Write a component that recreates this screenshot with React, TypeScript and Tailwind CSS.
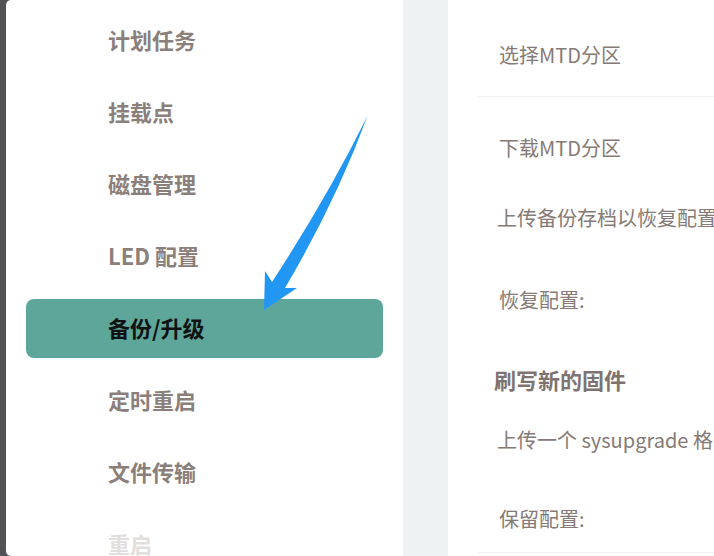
import React from "react";

const menu = [
  { label: "计划任务" },
  { label: "挂载点" },
  { label: "磁盘管理" },
  { label: "LED 配置" },
  { label: "备份/升级", active: true },
  { label: "定时重启" },
  { label: "文件传输" },
  { label: "重启", faded: true },
];

const font = { fontFamily: '"Noto Sans CJK SC", "Noto Sans", sans-serif' };

export default function App() {
  return (
    <div
      className="relative flex h-[556px] w-[714px] overflow-hidden bg-[#525259]"
      style={font}
    >
      {/* Sidebar */}
      <div className="ml-[6px] flex w-[397px] flex-col rounded-l-[5px] bg-white pt-[4px]">
        {menu.map((m) => (
          <div key={m.label} className="flex h-[72px] shrink-0 items-center px-[20px]">
            <div
              className={
                "flex h-[59px] w-full items-center rounded-[8px] pb-[3px] pl-[82px] text-[22px] font-bold leading-none " +
                (m.active
                  ? "bg-[#5ea69a] text-[#111111]"
                  : m.faded
                  ? "text-[#e2dedd]"
                  : "text-[#8b7f7b]")
              }
            >
              {m.label}
            </div>
          </div>
        ))}
      </div>

      {/* Gap strip */}
      <div className="w-[45px] shrink-0 bg-[#eef2f3]" />

      {/* Content */}
      <div className="flex min-w-0 flex-1 flex-col bg-white pl-[30px] pt-[41px] text-[20px] leading-[28px] text-[#857a76] whitespace-nowrap">
        <div className="border-b border-[#f0f0f0] pb-[27px] pl-[21px]">选择MTD分区</div>
        <div className="mt-[37px] pl-[21px]">下载MTD分区</div>
        <div className="mt-[42px] pl-[19px]">上传备份存档以恢复配置</div>
        <div className="mt-[54px] pl-[21px]">恢复配置:</div>
        <div className="mt-[51px] pl-[16px] text-[22px] font-bold text-[#7e7370]">刷写新的固件</div>
        <div className="mt-[33px] pl-[19px]">上传一个 sysupgrade 格式的固件</div>
        <div className="mt-[51px] border-b border-[#f0f0f0] pb-[19px] pl-[21px]">保留配置:</div>
      </div>

      {/* Arrow annotation */}
      <svg
        className="pointer-events-none absolute left-0 top-0"
        width="714"
        height="556"
        viewBox="0 0 714 556"
      >
        <path
          d="M367.5,116 Q326.25,199 272,282 L265,271 L264,310 L297,288 L285,288 Q335.75,202 367.5,116 Z"
          fill="#2196f3"
        />
      </svg>
    </div>
  );
}
